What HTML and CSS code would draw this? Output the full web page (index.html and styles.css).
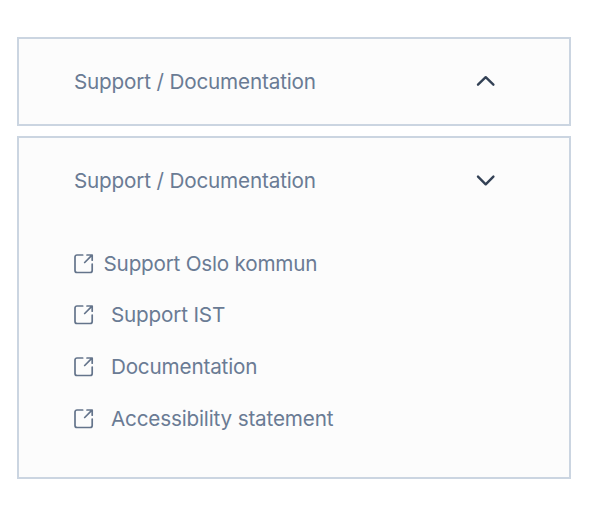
FILE: index.html
```html
<!DOCTYPE html>
<html lang="en">
<head>
<meta charset="utf-8">
<title>Support</title>
<link rel="stylesheet" href="styles.css">
</head>
<body>
<svg class="sprite" aria-hidden="true">
  <symbol id="external" viewBox="0 0 20 20"><path d="M8.700 1H3A2 2 0 0 0 1 3v13.500a2 2 0 0 0 2 2h13.200a2 2 0 0 0 2-2V10M13 1h5.200v5.200M18 1.200l-7.300 7.300"/></symbol>
</svg>
<main class="stack">
  <section class="panel">
    <header class="head"><span>Support / Documentation</span><svg class="chevron" viewBox="0 0 20 12"><path d="M2 8.700l7.700-7.500 7.700 7.500"/></svg></header>
  </section>
  <section class="panel open">
    <header class="head"><span>Support / Documentation</span><svg class="chevron" viewBox="0 0 20 12"><path d="M2 1.600l7.700 7.700 7.700-7.700"/></svg></header>
    <ul class="links">
      <li class="tight"><svg class="ext"><use href="#external"/></svg><span>Support Oslo kommun</span></li>
      <li><svg class="ext"><use href="#external"/></svg><span>Support IST</span></li>
      <li><svg class="ext"><use href="#external"/></svg><span>Documentation</span></li>
      <li><svg class="ext"><use href="#external"/></svg><span>Accessibility statement</span></li>
    </ul>
  </section>
</main>
</body>
</html>
```
FILE: styles.css
```css
* { box-sizing: border-box; }
body { margin: 0; background: #fff; font: 400 20.7px/26px Inter, sans-serif; letter-spacing: -0.17px; color: #6a7b94; }
.sprite { display: none; }
.stack { display: flex; flex-direction: column; gap: 10.4px; padding: 37px 21.500px 0 16.700px; }
.panel { height: 88.500px; border: 2px solid #cbd5e1; background: #fcfcfc; padding: 28.500px 73px 0 55.200px; }
.open { height: 343.500px; padding-top: 29px; }
.head { display: flex; align-items: center; justify-content: space-between; height: 28px; white-space: nowrap; }
.chevron { width: 20px; height: 12px; overflow: visible; fill: none; stroke: #334155; stroke-width: 2.4; stroke-linecap: round; stroke-linejoin: round; }
.links { list-style: none; margin: 43px 0 0; padding: 0; }
.links li { display: flex; align-items: center; gap: 17px; height: 51.7px; white-space: nowrap; }
.links .tight { gap: 9.700px; letter-spacing: -0.22px; }
.ext { width: 20px; height: 20px; fill: none; stroke: #64748b; stroke-width: 1.7; stroke-linecap: round; stroke-linejoin: round; }
```
